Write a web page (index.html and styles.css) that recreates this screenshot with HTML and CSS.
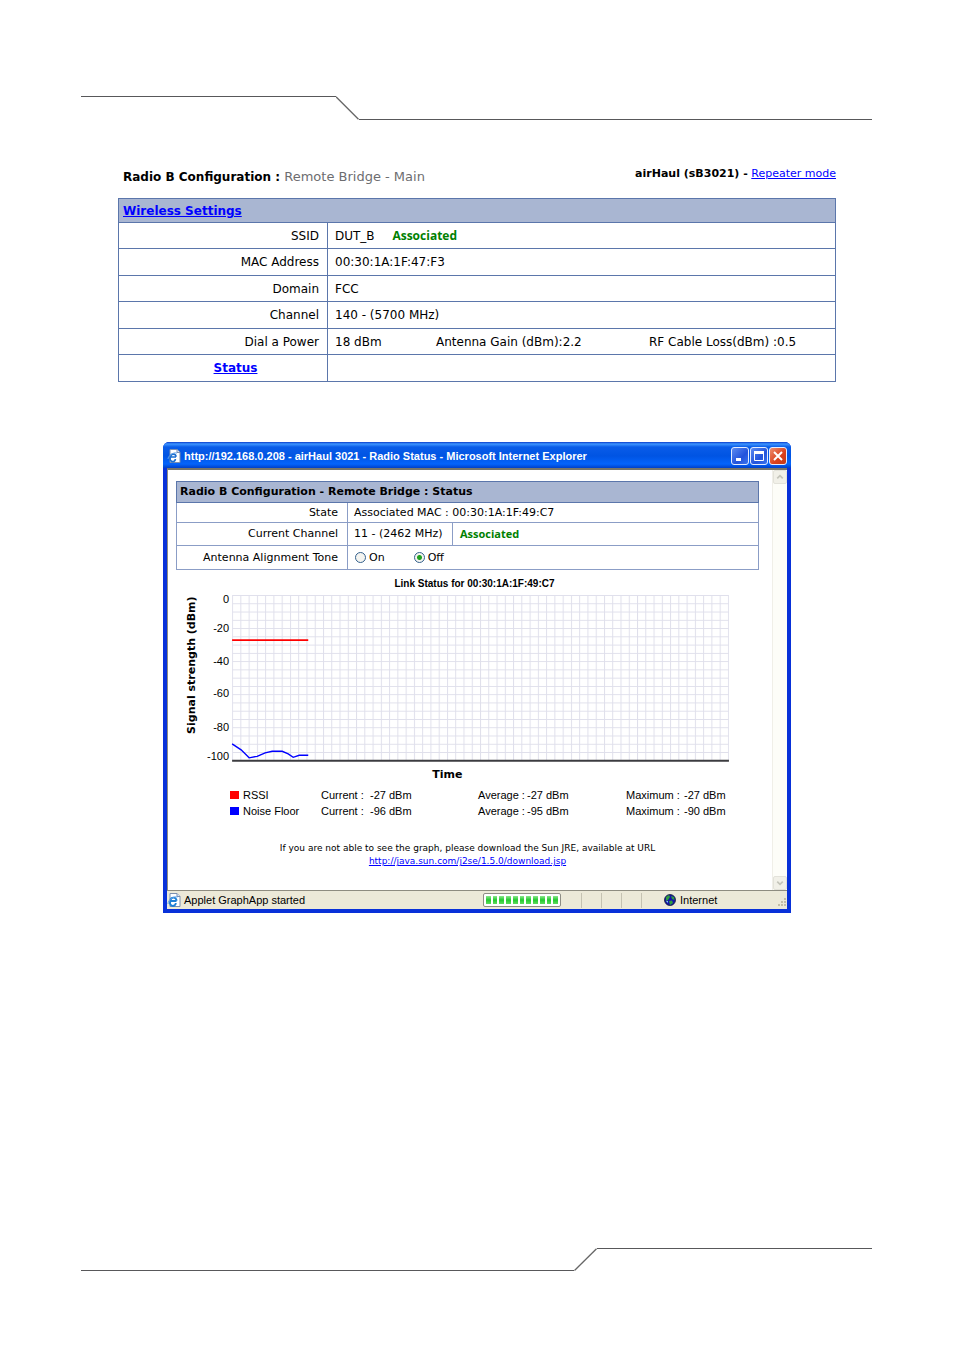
FILE: index.html
```html
<!DOCTYPE html>
<html lang="en">
<head>
<meta charset="utf-8">
<meta name="viewport" content="width=device-width, initial-scale=1">
<title>Radio B Configuration</title>
<link rel="stylesheet" href="styles.css">
</head>
<body>
<div class="page">
  <div class="rule rule-top" aria-hidden="true">
    <div class="rule-left"></div>
    <svg class="rule-slant" viewBox="0 0 23 24"><path d="M0 .8L22.5 23.3" fill="none" stroke="#666" stroke-width="1.3"/></svg>
    <div class="rule-right"></div>
  </div>

  <main>
    <section class="config">
      <header class="config-head">
        <h1 class="config-title">Radio B Configuration : <span class="muted">Remote Bridge - Main</span></h1>
        <p class="config-mode"><b>airHaul (sB3021) -</b> <a href="#">Repeater mode</a></p>
      </header>
      <table class="settings">
        <colgroup><col class="col-label"><col></colgroup>
        <tr><th class="band" colspan="2"><a href="#">Wireless Settings</a></th></tr>
        <tr><th class="label">SSID</th><td>DUT_B <b class="linked">Associated</b></td></tr>
        <tr><th class="label">MAC Address</th><td>00:30:1A:1F:47:F3</td></tr>
        <tr><th class="label">Domain</th><td>FCC</td></tr>
        <tr><th class="label">Channel</th><td>140 - (5700 MHz)</td></tr>
        <tr><th class="label">Dial a Power</th><td><div class="power"><span>18 dBm</span><span>Antenna Gain (dBm):2.2</span><span>RF Cable Loss(dBm) :0.5</span></div></td></tr>
        <tr><th class="status-link"><a href="#">Status</a></th><td></td></tr>
      </table>
    </section>

    <section class="window">
      <header class="titlebar">
        <svg class="icon-page" viewBox="0 0 14 14"><path d="M3 .5h7l3 3v10H3z" fill="#fff" stroke="#7b8fb0"/><path d="M10 .5v3h3" fill="#dbe5f7" stroke="#7b8fb0"/><path d="M9 8H3.800a2.700 2.700 0 1 0 4.600 2M3.800 7.500a2.600 2.600 0 0 1 5.200.3" fill="none" stroke="#1c6fd0" stroke-width="1.700"/><path d="M1 10C1 7 6 3 10 4" fill="none" stroke="#5aa0ea"/></svg>
        <h2 class="window-title">http://192.168.0.208 - airHaul 3021 - Radio Status - Microsoft Internet Explorer</h2>
        <div class="controls">
          <button class="control" type="button" aria-label="Minimize"><svg viewBox="0 0 16 16"><path d="M4 11.500h5" stroke="#fff" stroke-width="3"/></svg></button>
          <button class="control" type="button" aria-label="Maximize"><svg viewBox="0 0 16 16"><path d="M3.500 4v8.500h9V4" fill="none" stroke="#fff"/><path d="M3 4.500h10" stroke="#fff" stroke-width="3"/></svg></button>
          <button class="control close" type="button" aria-label="Close"><svg viewBox="0 0 16 16"><path d="M4 4l8 8M12 4l-8 8" stroke="#fff" stroke-width="2"/></svg></button>
        </div>
      </header>

      <div class="client">
        <div class="content">
          <table class="radio">
            <colgroup><col class="col-radio-label"><col class="col-channel"><col></colgroup>
            <tr><th class="band" colspan="3">Radio B Configuration - Remote Bridge : Status</th></tr>
            <tr class="row-state"><th class="label">State</th><td colspan="2">Associated MAC : 00:30:1A:1F:49:C7</td></tr>
            <tr class="row-channel"><th class="label">Current Channel</th><td>11 - (2462 MHz)</td><td class="split"><b class="good">Associated</b></td></tr>
            <tr class="row-tone"><th class="label">Antenna Alignment Tone</th><td colspan="2">
              <div class="tones">
                <label class="tone"><input type="radio" name="tone"> On</label>
                <label class="tone"><input type="radio" name="tone" checked> Off</label>
              </div></td></tr>
          </table>

          <svg class="chart" viewBox="0 0 582 212" role="img" aria-label="Link status graph">
            <defs>
              <pattern id="grid" x="56" y="25" width="8.250" height="8.250" patternUnits="userSpaceOnUse"><path d="M0 .5H8.250M.5 0V8.250" fill="none" stroke="#dfdfeb"/></pattern>
            </defs>
            <text class="chart-title" x="298" y="17" text-anchor="middle">Link Status for 00:30:1A:1F:49:C7</text>
            <rect x="56" y="25" width="496" height="165" fill="url(#grid)"/>
            <path d="M56 190.500h496" stroke="#3c3c40" stroke-width="2"/>
            <g class="tick" text-anchor="end">
              <text x="53" y="33">0</text><text x="53" y="62">-20</text><text x="53" y="95">-40</text><text x="53" y="127">-60</text><text x="53" y="161">-80</text><text x="53" y="190">-100</text>
            </g>
            <text class="axis" transform="translate(19 95) rotate(-90)" text-anchor="middle">Signal strength (dBm)</text>
            <text class="axis" x="271" y="208" text-anchor="middle">Time</text>
            <path d="M56 70h76" stroke="#f00" stroke-width="1.700"/>
            <path d="M56 173.500l9 6 8 8 8-1.500 8-3.500 7-1.500h10l6 2.500 5 3.500 6-2h9" fill="none" stroke="#00f" stroke-width="1.400"/>
          </svg>

          <table class="legend">
            <colgroup><col class="lg-name"><col class="lg-a"><col class="lg-b"><col class="lg-a"><col class="lg-c"><col class="lg-d"><col></colgroup>
            <tr><th><span class="swatch rssi"></span>RSSI</th><td>Current :</td><td>-27 dBm</td><td>Average :</td><td>-27 dBm</td><td>Maximum :</td><td>-27 dBm</td></tr>
            <tr><th><span class="swatch noise"></span>Noise Floor</th><td>Current :</td><td>-96 dBm</td><td>Average :</td><td>-95 dBm</td><td>Maximum :</td><td>-90 dBm</td></tr>
          </table>

          <p class="hint">If you are not able to see the graph, please download the Sun JRE, available at URL<br><a href="#">http://java.sun.com/j2se/1.5.0/download.jsp</a></p>
        </div>
        <div class="scroll">
          <button class="scroll-btn" type="button" aria-label="Scroll up" disabled><svg viewBox="0 0 13 13"><path d="M3.500 8l3-3 3 3" fill="none" stroke="#c4c4ba" stroke-width="1.800"/></svg></button>
          <button class="scroll-btn" type="button" aria-label="Scroll down" disabled><svg viewBox="0 0 13 13"><path d="M3.500 5l3 3 3-3" fill="none" stroke="#c4c4ba" stroke-width="1.800"/></svg></button>
        </div>
      </div>

      <footer class="statusbar">
        <svg class="icon-page" viewBox="0 0 14 14"><path d="M3 .5h7l3 3v10H3z" fill="#fff" stroke="#7b8fb0"/><path d="M10 .5v3h3" fill="#dbe5f7" stroke="#7b8fb0"/><path d="M9.500 8H3.800a2.900 2.900 0 1 0 5 2M3.500 7.500a3 3 0 0 1 6 .3" fill="none" stroke="#1c7fd6" stroke-width="1.900"/><path d="M1 11C1 7 6 3 10.500 4" fill="none" stroke="#5aa0ea"/></svg>
        <span class="status-text">Applet GraphApp started</span>
        <div class="progress" role="progressbar" aria-label="Loading"><i></i><i></i><i></i><i></i><i></i><i></i><i></i><i></i><i></i><i></i><i></i></div>
        <span class="pane"></span><span class="pane"></span><span class="pane"></span><span class="pane"></span>
        <div class="zone">
          <svg class="icon-globe" viewBox="0 0 12 12"><circle cx="6" cy="6" r="5.500" fill="#1414a8" stroke="#152030" stroke-width=".8"/><path d="M2 3l3-2 1 2-2 3-2 1zM7 2l3 1 .5 3L8 5zM5 7l3-.5L9 9l-3 2z" fill="#2f9e3e"/><path d="M2 7l2 0 0 2z" fill="#8ad0f0"/></svg>
          <span>Internet</span>
          <svg class="grip" viewBox="0 0 10 10"><path d="M7 1h2v2H7zM4 4h2v2H4zM7 4h2v2H7zM1 7h2v2H1zM4 7h2v2H4zM7 7h2v2H7z" fill="#c2bda8"/></svg>
        </div>
      </footer>
    </section>
  </main>

  <div class="rule rule-bottom" aria-hidden="true">
    <div class="rule-left"></div>
    <svg class="rule-slant" viewBox="0 0 23 24"><path d="M.5 22.500L22.500 .8" fill="none" stroke="#666" stroke-width="1.300"/></svg>
    <div class="rule-right"></div>
  </div>
</div>
</body>
</html>
```
FILE: styles.css
```css
* { box-sizing: border-box; }
body {
  margin: 0;
  background: #fff;
  color: #000;
  font-family: "DejaVu Sans", Verdana, sans-serif;
  font-size: 12px;
}
a { color: #00f; }
h1, h2, p { margin: 0; }
.page {
  min-height: 100vh;
  padding: 96px 82px 80px 81px;
  display: flex;
  flex-direction: column;
}

/* page rules */
.rule { display: flex; height: 24px; }
.rule-slant { width: 23px; height: 24px; flex: none; }
.rule-top .rule-left { flex: 255; border-top: 1px solid #58585a; }
.rule-top .rule-right { flex: 513; border-bottom: 1px solid #58585a; }
.rule-bottom { margin-top: auto; height: 23px; }
.rule-bottom .rule-left { flex: 493; border-bottom: 1px solid #58585a; }
.rule-bottom .rule-right { flex: 275; border-top: 1px solid #58585a; }

/* configuration */
.config { margin: 0 36px 0 37px; padding-top: 46px; }
.config-head {
  display: flex;
  justify-content: space-between;
  height: 32px;
  padding-left: 5px;
}
.config-title { font-size: 12px; line-height: 22px; }
.muted { color: #6d6d70; font-size: 13px; font-weight: normal; }
.config-mode { font-size: 11px; line-height: 16px; }
table { border-collapse: collapse; table-layout: fixed; width: 100%; }
th { font-weight: normal; text-align: left; }
.settings { border: 1px solid #5b76ab; }
.settings th, .settings td { border: 1px solid #5b76ab; padding: 0 7px; height: 27px; line-height: 16px; }
.settings tr:nth-child(even) th, .settings tr:nth-child(even) td { height: 26px; }
.settings .band, .radio .band { background: #a9b6d2; font-weight: bold; }
.settings .band { height: 24px; padding: 0 4px; }
.settings .label, .radio .label { text-align: right; }
.settings .label { padding-right: 8px; }
.col-label { width: 209px; }
.settings .status-link { text-align: center; padding-left: 32px; font-weight: bold; }
.linked { color: #008000; margin-left: 14px; font-family: "Open Sans", "Noto Sans", sans-serif; }
.power { display: grid; grid-template-columns: 101fr 213fr 179fr; white-space: nowrap; }

/* browser window */
.window {
  margin: 60px 81px 0 82px;
  border: solid #0831d9;
  border-width: 0 4px 4px;
  border-radius: 6px 6px 0 0;
  background: #0831d9;
}
.titlebar {
  display: flex;
  align-items: center;
  height: 26px;
  margin: 0 -4px;
  padding: 2px 4px 0;
  border-radius: 6px 6px 0 0;
  background: linear-gradient(#0a3ccb 0, #3d95ff 2px, #0a5ce8 5px, #0054e3 14px, #0464fb 22px, #0040c8 100%);
}
.icon-page { width: 14px; height: 14px; flex: none; }
.window-title {
  flex: 1;
  padding-left: 3px;
  color: #fff;
  font: bold 11px "Liberation Sans", Arial, sans-serif;
  white-space: nowrap;
}
.controls { display: flex; gap: 1px; }
.control {
  width: 18px;
  height: 18px;
  padding: 0;
  border: 1px solid #e4ecff;
  border-radius: 3px;
  background: linear-gradient(135deg, #5d8bf0, #2253dc 60%, #3b74ee);
}
.control.close { background: linear-gradient(135deg, #ee8f70, #d9401c 60%, #c33a18); }
.control svg { display: block; width: 16px; height: 16px; }
.client { display: flex; background: #fff; border-top: 2px solid #77766b; border-left: 1px solid #8e8c80; }
.content { flex: 1; min-width: 0; padding: 11px 13px 22px 8px; }
.scroll {
  width: 15px;
  display: flex;
  flex-direction: column;
  justify-content: space-between;
  background: #fdfdf8;
  border-left: 1px solid #f0efe8;
}
.scroll-btn {
  width: 14px;
  height: 14px;
  padding: 0;
  border: 1px solid #e3e2da;
  border-radius: 2px;
  background: #f1f0e8;
}
.scroll-btn svg { display: block; width: 12px; height: 12px; }

.radio { font-size: 11px; border: 1px solid #5b76ab; }
.radio th, .radio td { border: 1px solid #8b9dc6; padding: 0 6px; line-height: 14px; }
.radio .label { padding-right: 9px; }
.radio .band { height: 21px; padding: 0 3px; border-color: #5b76ab; }
.row-state { height: 20px; }
.row-channel { height: 23px; }
.row-tone { height: 24px; }
.col-radio-label { width: 171px; }
.col-channel { width: 105px; }
.radio .split { padding-left: 7px; }
.good { color: #008000; font-family: "Open Sans", "Noto Sans", sans-serif; }
.tones { display: flex; gap: 28px; }
.tone { display: flex; align-items: center; gap: 2px; }
.tone input {
  appearance: none;
  width: 11px;
  height: 11px;
  margin: 0 1px;
  border: 1px solid #33608c;
  border-radius: 50%;
  background: #f4f4f0;
}
.tone input:checked { background: radial-gradient(circle, #21a121 2px, #f4f4f0 3px); }

.chart { display: block; width: 100%; height: auto; }
.chart-title { font: bold 10px "Liberation Sans", Arial, sans-serif; }
.tick { font: 11px "Liberation Sans", Arial, sans-serif; }
.axis { font: bold 11px "DejaVu Sans", Verdana, sans-serif; }

.legend { margin: 5px 0 0 54px; width: calc(100% - 54px); font: 11px "Liberation Sans", Arial, sans-serif; }
.legend th, .legend td { padding: 0; height: 16px; white-space: nowrap; }
.lg-name { width: 91px; }
.lg-a { width: 49px; }
.lg-b { width: 108px; }
.lg-c { width: 99px; }
.lg-d { width: 58px; }
.swatch { display: inline-block; width: 9px; height: 8px; margin-right: 4px; }
.rssi { background: #f00; }
.noise { background: #00f; }
.hint { margin-top: 23px; text-align: center; font-size: 9px; line-height: 13px; }

.statusbar {
  display: flex;
  align-items: center;
  height: 19px;
  border-top: 1px solid #8e8c80;
  background: #ece9d8;
  font: 11px "Liberation Sans", Arial, sans-serif;
}
.status-text { flex: 1; padding-left: 3px; }
.progress {
  display: flex;
  gap: 2px;
  width: 78px;
  height: 14px;
  margin-right: 1px;
  padding: 2px;
  border: 1px solid #8e8d84;
  border-radius: 2px;
  background: #fff;
}
.progress i { flex: 1; background: linear-gradient(#8ce68c, #22c92e 50%, #5fdc5f); }
.pane { width: 20px; height: 15px; border-right: 1px solid #c5c2b2; }
.zone { display: flex; align-items: center; gap: 4px; width: 145px; padding-left: 22px; }
.icon-globe { width: 12px; height: 12px; flex: none; }
.grip { width: 10px; height: 10px; margin: 4px 0 0 auto; }
```
